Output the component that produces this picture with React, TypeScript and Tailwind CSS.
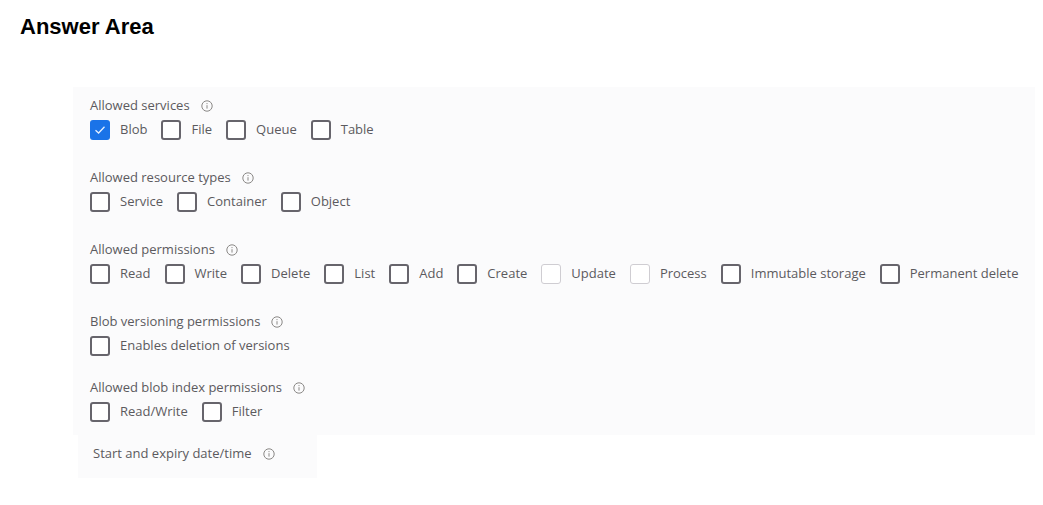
import React from "react";

type Opt = { label: string; checked?: boolean; disabled?: boolean };

const InfoIcon = () => (
  <svg width="12" height="12" viewBox="0 0 12 12" className="shrink-0">
    <circle cx="6" cy="6" r="5.2" fill="none" stroke="#8a8886" strokeWidth="1" />
    <line x1="6" y1="5.2" x2="6" y2="8.6" stroke="#8a8886" strokeWidth="1" />
    <circle cx="6" cy="3.6" r="0.6" fill="#8a8886" />
  </svg>
);

const Box = ({ checked, disabled }: { checked?: boolean; disabled?: boolean }) => {
  if (checked) {
    return (
      <span className="w-5 h-5 rounded-[3px] bg-[#1a73e8] flex items-center justify-center shrink-0">
        <svg width="12" height="10" viewBox="0 0 12 10">
          <path d="M1.5 5.2 L4.6 8 L10.5 1.8" fill="none" stroke="#e6f0ff" strokeWidth="1.3" />
        </svg>
      </span>
    );
  }
  return (
    <span
      className={
        disabled
          ? "w-5 h-5 rounded-[3px] border border-[#cfcdd2] bg-white shrink-0"
          : "w-5 h-5 rounded-[3px] border-2 border-[#67656c] bg-white shrink-0"
      }
    />
  );
};

const Section = ({ title, options, className }: { title: string; options: Opt[]; className: string }) => (
  <div className={className}>
    <div className="flex items-center gap-[11px] h-4 text-[13px] text-[#5b5a5e]">
      <span>{title}</span>
      <InfoIcon />
    </div>
    <div className="flex items-center gap-[14px] mt-[6px] h-5">
      {options.map((o) => (
        <label key={o.label} className="flex items-center gap-[10px] text-[13px] text-[#5b5a5e]">
          <Box checked={o.checked} disabled={o.disabled} />
          <span>{o.label}</span>
        </label>
      ))}
    </div>
  </div>
);

export default function App() {
  return (
    <div className="w-[1043px] h-[505px] bg-white" style={{ fontFamily: '"Open Sans", "Noto Sans", sans-serif' }}>
      <h1
        className="pl-5 pt-[13px] text-[22px] font-bold text-black leading-[28px]"
        style={{ fontFamily: '"Liberation Sans", Arial, sans-serif' }}
      >
        Answer Area
      </h1>
      <div className="ml-[73px] mt-[46px] w-[962px] bg-[#fbfbfc] pl-[17px] pt-[11px] pb-[13px]">
        <Section
          title="Allowed services"
          className=""
          options={[{ label: "Blob", checked: true }, { label: "File" }, { label: "Queue" }, { label: "Table" }]}
        />
        <Section
          title="Allowed resource types"
          className="mt-[30px]"
          options={[{ label: "Service" }, { label: "Container" }, { label: "Object" }]}
        />
        <Section
          title="Allowed permissions"
          className="mt-[30px]"
          options={[
            { label: "Read" },
            { label: "Write" },
            { label: "Delete" },
            { label: "List" },
            { label: "Add" },
            { label: "Create" },
            { label: "Update", disabled: true },
            { label: "Process", disabled: true },
            { label: "Immutable storage" },
            { label: "Permanent delete" },
          ]}
        />
        <Section
          title="Blob versioning permissions"
          className="mt-[30px]"
          options={[{ label: "Enables deletion of versions" }]}
        />
        <Section
          title="Allowed blob index permissions"
          className="mt-[24px]"
          options={[{ label: "Read/Write" }, { label: "Filter" }]}
        />
      </div>
      <div className="ml-[78px] w-[239px] h-[43px] bg-[#fbfbfc] pl-[15px] pt-[11px]">
        <div className="flex items-center gap-[11px] h-4 text-[13px] text-[#5b5a5e]">
          <span>Start and expiry date/time</span>
          <InfoIcon />
        </div>
      </div>
    </div>
  );
}
